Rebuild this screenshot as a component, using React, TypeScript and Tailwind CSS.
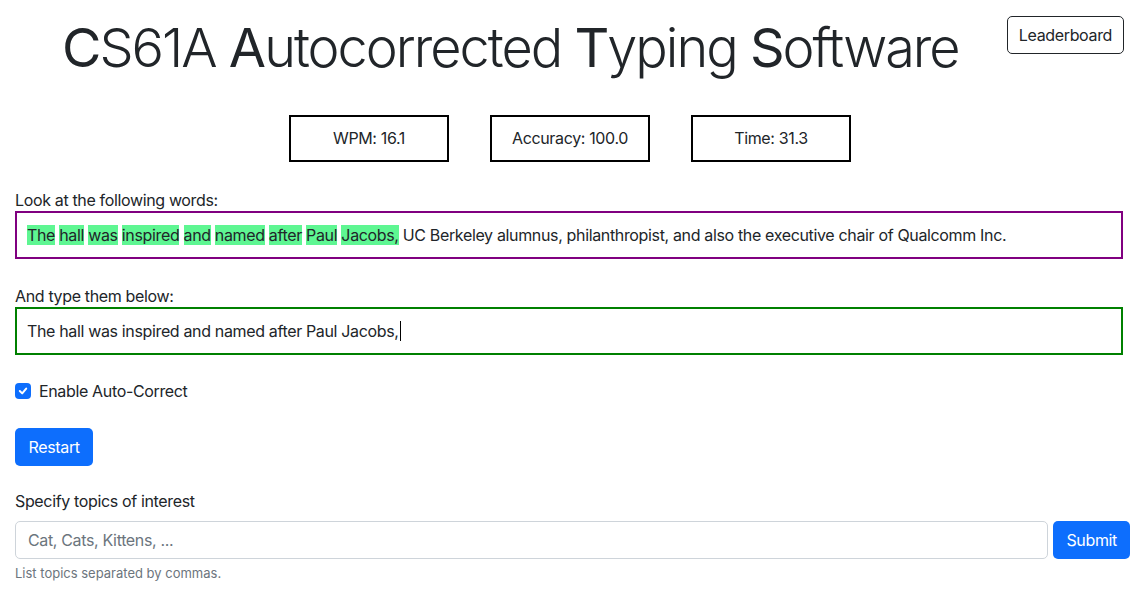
import React from 'react';

const prompt = 'The hall was inspired and named after Paul Jacobs, UC Berkeley alumnus, philanthropist, and also the executive chair of Qualcomm Inc.';
const typedCount = 9;

const App: React.FC = () => {
  const words = prompt.split(' ');

  return (
    <div className="min-h-screen bg-white font-['Inter','Liberation_Sans',sans-serif] text-[16px] leading-6 tracking-[-0.35px] text-[#212529] px-[15px]">
      {/* Header */}
      <div className="flex items-start">
        <h1 className="whitespace-nowrap pl-[47px] pt-[16px] text-[54px] font-light leading-[1.2] tracking-[-2px]">
          <span className="font-normal">C</span>S61A <span className="font-normal">A</span>utocorrected{' '}
          <span className="font-normal">T</span>yping <span className="font-normal">S</span>oftware
        </h1>
        <button className="ml-auto mr-[-1px] mt-[16px] h-[38px] rounded-[5px] border border-[#212529] px-[11px] text-[16px] text-[#212529]">
          Leaderboard
        </button>
      </div>

      {/* Stats */}
      <div className="mt-[34px] flex justify-center gap-[41px] pl-[2px]">
        {['WPM: 16.1', 'Accuracy: 100.0', 'Time: 31.3'].map((s) => (
          <div key={s} className="flex h-[47px] w-[160px] items-center justify-center border-2 border-black">
            {s}
          </div>
        ))}
      </div>

      {/* Prompt */}
      <div className="mt-[26px]">
        <div>Look at the following words:</div>
        <div className="mt-[-1px] flex h-[48px] items-center border-2 border-[#800080] px-[10px]">
          <span>
            {words.map((w, i) => (
              <React.Fragment key={i}>
                {i < typedCount ? <span className="bg-[#5ef692]">{w}</span> : w}
                {i < words.length - 1 ? ' ' : ''}
              </React.Fragment>
            ))}
          </span>
        </div>
      </div>

      {/* Input */}
      <div className="mt-[25px]">
        <div>And type them below:</div>
        <div className="mt-[-1px] flex h-[48px] items-center border-2 border-[#008000] px-[10px]">
          <span>The hall was inspired and named after Paul Jacobs,</span>
          <span className="ml-[1px] h-[20px] w-px bg-black" />
        </div>
      </div>

      {/* Checkbox */}
      <div className="mt-[24px] flex items-center gap-2">
        <span className="flex h-4 w-4 items-center justify-center rounded-[4px] bg-[#0d6efd]">
          <svg viewBox="0 0 20 20" className="h-4 w-4" fill="none">
            <path d="M6 10l3 3 5-6" stroke="#fff" strokeWidth="2.5" strokeLinecap="round" strokeLinejoin="round" />
          </svg>
        </span>
        <span>Enable Auto-Correct</span>
      </div>

      {/* Restart */}
      <button className="mt-[25px] h-[38px] rounded-[5px] bg-[#0d6efd] px-[13.5px] text-white">Restart</button>

      {/* Topics */}
      <div className="mt-[23px]">Specify topics of interest</div>
      <div className="mt-[8px] flex gap-[5px]">
        <input
          placeholder="Cat, Cats, Kittens, ..."
          className="h-[38px] min-w-0 flex-1 rounded-[5px] border border-[#ced4da] px-3 text-[16px] outline-none placeholder:text-[#6c757d]"
        />
        <button className="mr-[-7px] h-[38px] rounded-[5px] bg-[#0d6efd] px-[13px] text-white">Submit</button>
      </div>
      <div className="mt-[4px] text-[13px] leading-5 tracking-normal text-[#6c757d]">List topics separated by commas.</div>
    </div>
  );
};

export default App;
